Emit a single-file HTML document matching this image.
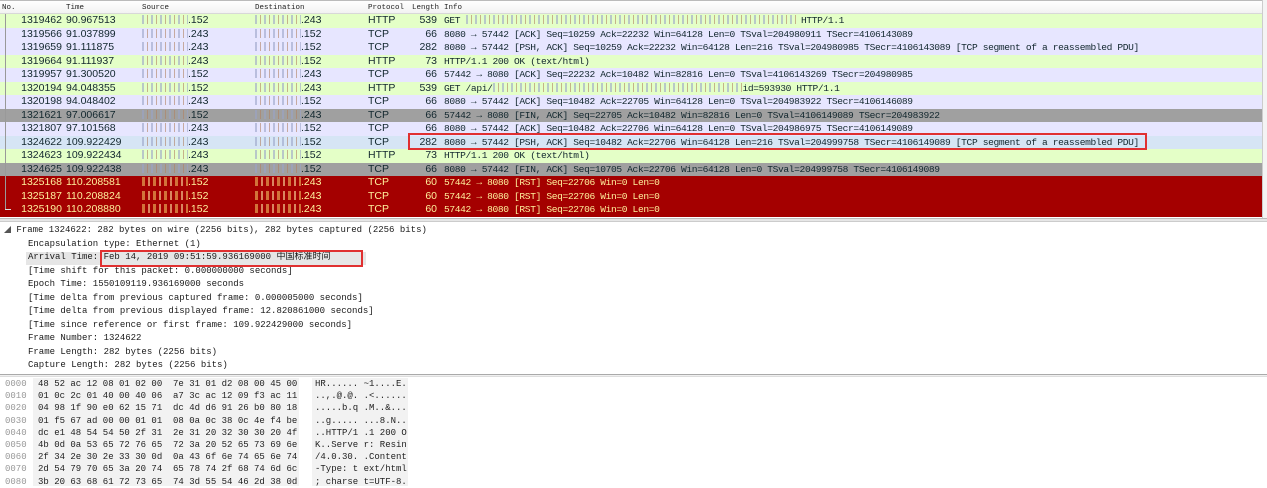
<!DOCTYPE html>
<html><head><meta charset="utf-8"><style>
*{margin:0;padding:0;box-sizing:border-box}
body{width:1267px;height:486px;background:#fff;position:relative;overflow:hidden;font-family:"Liberation Sans","Noto Sans CJK SC",sans-serif}
.hdr{position:absolute;left:0;top:0;width:1267px;height:14px;background:linear-gradient(#fff,#f2f2f2);border-bottom:1px solid #d8d8d8;border-top:1px solid #bbb;font-family:"Liberation Mono",monospace;font-size:7.5px;color:#222}
.hdr span{position:absolute;top:3px}
.row{position:absolute;left:0;width:1262px;height:13.55px;font-size:10.5px;line-height:13.5px;color:#12272e;white-space:nowrap}
.row span{position:absolute;top:0}
.g{background:#e4ffc7}.l{background:#e7e6ff}.d{background:#a0a0a0}.s{background:#d6e5f5}.r{background:#a40000;color:#fff09c}
.no{left:0;width:62px;text-align:right}.tm{left:66px}.src{left:142px}.dst{left:255px}.pr{left:368px}.ln{left:400px;width:37px;text-align:right}
.inf{left:444px;font-family:"Liberation Mono",monospace;font-size:9.6px;letter-spacing:-0.37px}
.bl{display:inline-block;width:46px;height:9px;vertical-align:-1px;background:repeating-linear-gradient(90deg,#9aa4c8 0 2px,transparent 2px 5px,#b08060 5px 6px,transparent 6px 9px);opacity:.6}
.r .bl{background:repeating-linear-gradient(90deg,#f0c060 0 3px,transparent 3px 6px,#ffe0a0 6px 8px,transparent 8px 11px)}
.det{position:absolute;left:0;font-family:"Liberation Mono","Noto Sans CJK SC",monospace;font-size:9px;line-height:13.5px;color:#1a1a1a;white-space:nowrap}
.hex{position:absolute;font-family:"Liberation Mono",monospace;font-size:9px;line-height:12.2px;white-space:pre;color:#222}
.box{position:absolute;border:2px solid #e03030}
</style></head><body>
<div class="hdr"><span style="left:2px">No.</span><span style="left:66px">Time</span><span style="left:142px">Source</span><span style="left:255px">Destination</span><span style="left:368px">Protocol</span><span style="left:412px">Length</span><span style="left:444px">Info</span></div>

<div class="row g" style="top:14px"><span class="no">1319462</span><span class="tm">90.967513</span><span class="src"><i class="bl"></i>.152</span><span class="dst"><i class="bl"></i>.243</span><span class="pr">HTTP</span><span class="ln">539</span><span class="inf">GET <i class="bl" style="width:330px"></i> HTTP/1.1</span></div>
<div class="row l" style="top:27.5px"><span class="no">1319566</span><span class="tm">91.037899</span><span class="src"><i class="bl"></i>.243</span><span class="dst"><i class="bl"></i>.152</span><span class="pr">TCP</span><span class="ln">66</span><span class="inf">8080 → 57442 [ACK] Seq=10259 Ack=22232 Win=64128 Len=0 TSval=204980911 TSecr=4106143089</span></div>
<div class="row l" style="top:41px"><span class="no">1319659</span><span class="tm">91.111875</span><span class="src"><i class="bl"></i>.243</span><span class="dst"><i class="bl"></i>.152</span><span class="pr">TCP</span><span class="ln">282</span><span class="inf">8080 → 57442 [PSH, ACK] Seq=10259 Ack=22232 Win=64128 Len=216 TSval=204980985 TSecr=4106143089 [TCP segment of a reassembled PDU]</span></div>
<div class="row g" style="top:54.5px"><span class="no">1319664</span><span class="tm">91.111937</span><span class="src"><i class="bl"></i>.243</span><span class="dst"><i class="bl"></i>.152</span><span class="pr">HTTP</span><span class="ln">73</span><span class="inf">HTTP/1.1 200 OK  (text/html)</span></div>
<div class="row l" style="top:68px"><span class="no">1319957</span><span class="tm">91.300520</span><span class="src"><i class="bl"></i>.152</span><span class="dst"><i class="bl"></i>.243</span><span class="pr">TCP</span><span class="ln">66</span><span class="inf">57442 → 8080 [ACK] Seq=22232 Ack=10482 Win=82816 Len=0 TSval=4106143269 TSecr=204980985</span></div>
<div class="row g" style="top:81.5px"><span class="no">1320194</span><span class="tm">94.048355</span><span class="src"><i class="bl"></i>.152</span><span class="dst"><i class="bl"></i>.243</span><span class="pr">HTTP</span><span class="ln">539</span><span class="inf">GET /api/<i class="bl" style="width:250px"></i>id=593930 HTTP/1.1</span></div>
<div class="row l" style="top:95px"><span class="no">1320198</span><span class="tm">94.048402</span><span class="src"><i class="bl"></i>.243</span><span class="dst"><i class="bl"></i>.152</span><span class="pr">TCP</span><span class="ln">66</span><span class="inf">8080 → 57442 [ACK] Seq=10482 Ack=22705 Win=64128 Len=0 TSval=204983922 TSecr=4106146089</span></div>
<div class="row d" style="top:108.5px"><span class="no">1321621</span><span class="tm">97.006617</span><span class="src"><i class="bl"></i>.152</span><span class="dst"><i class="bl"></i>.243</span><span class="pr">TCP</span><span class="ln">66</span><span class="inf">57442 → 8080 [FIN, ACK] Seq=22705 Ack=10482 Win=82816 Len=0 TSval=4106149089 TSecr=204983922</span></div>
<div class="row l" style="top:122px"><span class="no">1321807</span><span class="tm">97.101568</span><span class="src"><i class="bl"></i>.243</span><span class="dst"><i class="bl"></i>.152</span><span class="pr">TCP</span><span class="ln">66</span><span class="inf">8080 → 57442 [ACK] Seq=10482 Ack=22706 Win=64128 Len=0 TSval=204986975 TSecr=4106149089</span></div>
<div class="row s" style="top:135.5px"><span class="no">1324622</span><span class="tm">109.922429</span><span class="src"><i class="bl"></i>.243</span><span class="dst"><i class="bl"></i>.152</span><span class="pr">TCP</span><span class="ln">282</span><span class="inf">8080 → 57442 [PSH, ACK] Seq=10482 Ack=22706 Win=64128 Len=216 TSval=204999758 TSecr=4106149089 [TCP segment of a reassembled PDU]</span></div>
<div class="row g" style="top:149px"><span class="no">1324623</span><span class="tm">109.922434</span><span class="src"><i class="bl"></i>.243</span><span class="dst"><i class="bl"></i>.152</span><span class="pr">HTTP</span><span class="ln">73</span><span class="inf">HTTP/1.1 200 OK  (text/html)</span></div>
<div class="row d" style="top:162.5px"><span class="no">1324625</span><span class="tm">109.922438</span><span class="src"><i class="bl"></i>.243</span><span class="dst"><i class="bl"></i>.152</span><span class="pr">TCP</span><span class="ln">66</span><span class="inf">8080 → 57442 [FIN, ACK] Seq=10705 Ack=22706 Win=64128 Len=0 TSval=204999758 TSecr=4106149089</span></div>
<div class="row r" style="top:176px"><span class="no">1325168</span><span class="tm">110.208581</span><span class="src"><i class="bl"></i>.152</span><span class="dst"><i class="bl"></i>.243</span><span class="pr">TCP</span><span class="ln">60</span><span class="inf">57442 → 8080 [RST] Seq=22706 Win=0 Len=0</span></div>
<div class="row r" style="top:189.5px"><span class="no">1325187</span><span class="tm">110.208824</span><span class="src"><i class="bl"></i>.152</span><span class="dst"><i class="bl"></i>.243</span><span class="pr">TCP</span><span class="ln">60</span><span class="inf">57442 → 8080 [RST] Seq=22706 Win=0 Len=0</span></div>
<div class="row r" style="top:203px;height:14px"><span class="no">1325190</span><span class="tm">110.208880</span><span class="src"><i class="bl"></i>.152</span><span class="dst"><i class="bl"></i>.243</span><span class="pr">TCP</span><span class="ln">60</span><span class="inf">57442 → 8080 [RST] Seq=22706 Win=0 Len=0</span></div>
<div style="position:absolute;left:5px;top:14px;width:1px;height:196px;background:#999"></div>
<div style="position:absolute;left:5px;top:209px;width:6px;height:1px;background:#ddd"></div>
<div style="position:absolute;left:1262px;top:0;width:5px;height:219px;background:#f4f4f4;border-left:1px solid #ccc"></div>
<div class="box" style="left:408px;top:133px;width:739px;height:17px"></div>
<div style="position:absolute;left:0;top:218px;width:1267px;height:4px;background:#e6e6e6;border-top:1px solid #bbb;border-bottom:1px solid #ccc"></div>

<div class="det" style="left:4px;top:224px"><span style="font-size:7px;color:#555">◢</span> Frame 1324622: 282 bytes on wire (2256 bits), 282 bytes captured (2256 bits)</div>
<div style="position:absolute;left:26px;top:252px;width:340px;height:13px;background:#e6e6e6"></div>
<div class="det" style="left:28px;top:237.5px">Encapsulation type: Ethernet (1)<br>Arrival Time: Feb 14, 2019 09:51:59.936169000 中国标准时间<br>[Time shift for this packet: 0.000000000 seconds]<br>Epoch Time: 1550109119.936169000 seconds<br>[Time delta from previous captured frame: 0.000005000 seconds]<br>[Time delta from previous displayed frame: 12.820861000 seconds]<br>[Time since reference or first frame: 109.922429000 seconds]<br>Frame Number: 1324622<br>Frame Length: 282 bytes (2256 bits)<br>Capture Length: 282 bytes (2256 bits)</div>
<div class="box" style="left:100px;top:250px;width:263px;height:17px"></div>

<div style="position:absolute;left:0;top:374px;width:1267px;height:3px;border-top:1px solid #aaa;border-bottom:1px solid #ddd;background:#f0f0f0"></div>
<div style="position:absolute;left:33px;top:378px;width:266px;height:108px;background:#f2f2f2"></div>
<div style="position:absolute;left:312px;top:378px;width:96px;height:108px;background:#f2f2f2"></div>
<div class="hex" style="left:5px;top:378px;color:#999">0000
0010
0020
0030
0040
0050
0060
0070
0080</div>
<div class="hex" style="left:38px;top:378px">48 52 ac 12 08 01 02 00  7e 31 01 d2 08 00 45 00
01 0c 2c 01 40 00 40 06  a7 3c ac 12 09 f3 ac 11
04 98 1f 90 e0 62 15 71  dc 4d d6 91 26 b0 80 18
01 f5 67 ad 00 00 01 01  08 0a 0c 38 0c 4e f4 be
dc e1 48 54 54 50 2f 31  2e 31 20 32 30 30 20 4f
4b 0d 0a 53 65 72 76 65  72 3a 20 52 65 73 69 6e
2f 34 2e 30 2e 33 30 0d  0a 43 6f 6e 74 65 6e 74
2d 54 79 70 65 3a 20 74  65 78 74 2f 68 74 6d 6c
3b 20 63 68 61 72 73 65  74 3d 55 54 46 2d 38 0d</div>
<div class="hex" style="left:315px;top:378px">HR...... ~1....E.
..,.@.@. .<......
.....b.q .M..&...
..g..... ...8.N..
..HTTP/1 .1 200 O
K..Serve r: Resin
/4.0.30. .Content
-Type: t ext/html
; charse t=UTF-8.</div>
</body></html>
